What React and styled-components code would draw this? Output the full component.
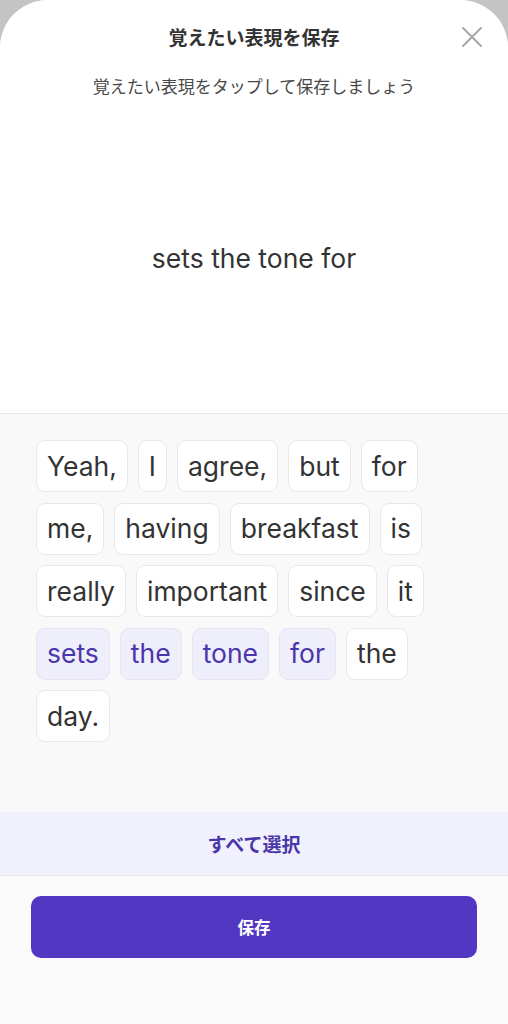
import React from "react";
import styled, { createGlobalStyle } from "styled-components";

const Global = createGlobalStyle`
  html, body { margin: 0; padding: 0; background: #c4c4c4; }
  body { font-family: "Inter", "Noto Sans CJK JP", sans-serif; }
  * { box-sizing: border-box; }
`;

const Sheet = styled.div`
  width: 508px;
  min-height: 1024px;
  border-radius: 48px 48px 0 0;
  background: #fafafa;
  overflow: hidden;
  display: flex;
  flex-direction: column;
`;

const Top = styled.section`
  height: 414px;
  background: #ffffff;
  border-bottom: 1px solid #e6e6e6;
  display: flex;
  flex-direction: column;
`;

const Header = styled.header`
  display: grid;
  grid-template-columns: 1fr auto 1fr;
  align-items: center;
  padding: 23px 24px 0 24px;
  height: 51px;
`;

const Title = styled.h1`
  grid-column: 2;
  margin: 0;
  font-family: "Noto Sans CJK JP", sans-serif;
  font-size: 19px;
  font-weight: 700;
  color: #333333;
  line-height: 28px;
`;

const CloseButton = styled.button`
  grid-column: 3;
  justify-self: end;
  width: 28px;
  height: 28px;
  margin-right: -2px;
  border: none;
  background: none;
  padding: 0;
  display: flex;
  align-items: center;
  justify-content: center;
  cursor: pointer;
`;

const Subtitle = styled.p`
  margin: 22px 0 0 0;
  text-align: center;
  font-family: "Noto Sans CJK JP", sans-serif;
  font-size: 17px;
  color: #484848;
  line-height: 26px;
`;

const PhraseArea = styled.div`
  flex: 1;
  display: flex;
  align-items: center;
  justify-content: center;
`;

const Phrase = styled.div`
  font-family: "Inter", sans-serif;
  font-size: 26.5px;
  color: #333333;
  padding-top: 4px;
`;

const Words = styled.div`
  flex: 1;
  display: flex;
  flex-wrap: wrap;
  align-content: flex-start;
  gap: 10.5px 10px;
  padding: 26px 36px 20px 36px;
  background: #f9f9f9;
`;

const Chip = styled.button`
  height: 52px;
  padding: 0 10px;
  border-radius: 9px;
  border: 1px solid ${(p) => (p.$selected ? "#e6e3f6" : "#e8e8e8")};
  background: ${(p) => (p.$selected ? "#efeefb" : "#ffffff")};
  color: ${(p) => (p.$selected ? "#4a36ab" : "#333333")};
  font-family: "Inter", sans-serif;
  font-size: 26.5px;
  line-height: 1;
  cursor: pointer;
`;

const SelectAll = styled.button`
  height: 64px;
  width: 100%;
  border: none;
  border-bottom: 1px solid #e6e6ee;
  background: #f1f0fd;
  color: #4a36ab;
  font-family: "Noto Sans CJK JP", sans-serif;
  font-size: 19px;
  font-weight: 700;
  cursor: pointer;
`;

const Footer = styled.div`
  height: 148px;
  padding: 20px 31px 0 31px;
  background: #fafafa;
`;

const SaveButton = styled.button`
  width: 100%;
  height: 62px;
  border: none;
  border-radius: 10px;
  background: #5237c2;
  color: #ffffff;
  font-family: "Noto Sans CJK JP", sans-serif;
  font-size: 16.5px;
  font-weight: 700;
  cursor: pointer;
`;

const words = [
  "Yeah,", "I", "agree,", "but", "for", "me,", "having", "breakfast", "is",
  "really", "important", "since", "it", "sets", "the", "tone", "for", "the", "day.",
];
const selected = new Set([13, 14, 15, 16]);

export default function App() {
  return (
    <>
      <Global />
      <Sheet>
        <Top>
          <Header>
            <Title>覚えたい表現を保存</Title>
            <CloseButton aria-label="閉じる">
              <svg width="22" height="22" viewBox="0 0 22 22">
                <path d="M2 2 L20 20 M20 2 L2 20" stroke="#a8a8a8" strokeWidth="2" strokeLinecap="round" />
              </svg>
            </CloseButton>
          </Header>
          <Subtitle>覚えたい表現をタップして保存しましょう</Subtitle>
          <PhraseArea>
            <Phrase>sets the tone for</Phrase>
          </PhraseArea>
        </Top>
        <Words>
          {words.map((w, i) => (
            <Chip key={i} $selected={selected.has(i)}>{w}</Chip>
          ))}
        </Words>
        <SelectAll>すべて選択</SelectAll>
        <Footer>
          <SaveButton>保存</SaveButton>
        </Footer>
      </Sheet>
    </>
  );
}
